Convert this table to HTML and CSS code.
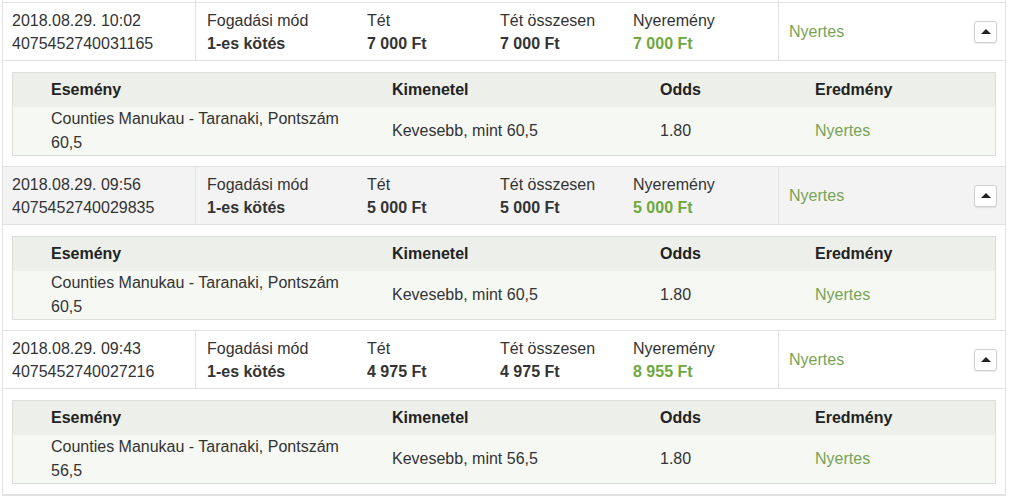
FILE: index.html
```html
<!DOCTYPE html>
<html lang="hu">
<head>
<meta charset="utf-8">
<title>Fogadások</title>
<link rel="stylesheet" href="styles.css">
</head>
<body>
<div class="bets">
  <div class="summary stub">
    <div class="c c1"></div><div class="c"></div><div class="c"></div><div class="c"></div><div class="c c5"></div><div class="c c6"></div>
  </div>

  <div class="summary">
    <div class="c c1"><div>2018.08.29. 10:02</div><div>4075452740031165</div></div>
    <div class="c"><div>Fogadási mód</div><div class="b">1-es kötés</div></div>
    <div class="c"><div>Tét</div><div class="b">7 000 Ft</div></div>
    <div class="c"><div>Tét összesen</div><div class="b">7 000 Ft</div></div>
    <div class="c c5"><div>Nyeremény</div><div class="b win">7 000 Ft</div></div>
    <div class="c c6"><span class="status">Nyertes</span><span class="toggle"><span class="tri"></span></span></div>
  </div>
  <div class="detail">
    <div class="dbox">
      <div class="drow dhead"><div>Esemény</div><div>Kimenetel</div><div>Odds</div><div>Eredmény</div></div>
      <div class="drow dbody"><div class="ev">Counties Manukau - Taranaki, Pontszám 60,5</div><div>Kevesebb, mint 60,5</div><div>1.80</div><div class="status">Nyertes</div></div>
    </div>
  </div>

  <div class="summary alt">
    <div class="c c1"><div>2018.08.29. 09:56</div><div>4075452740029835</div></div>
    <div class="c"><div>Fogadási mód</div><div class="b">1-es kötés</div></div>
    <div class="c"><div>Tét</div><div class="b">5 000 Ft</div></div>
    <div class="c"><div>Tét összesen</div><div class="b">5 000 Ft</div></div>
    <div class="c c5"><div>Nyeremény</div><div class="b win">5 000 Ft</div></div>
    <div class="c c6"><span class="status">Nyertes</span><span class="toggle"><span class="tri"></span></span></div>
  </div>
  <div class="detail">
    <div class="dbox">
      <div class="drow dhead"><div>Esemény</div><div>Kimenetel</div><div>Odds</div><div>Eredmény</div></div>
      <div class="drow dbody"><div class="ev">Counties Manukau - Taranaki, Pontszám 60,5</div><div>Kevesebb, mint 60,5</div><div>1.80</div><div class="status">Nyertes</div></div>
    </div>
  </div>

  <div class="summary">
    <div class="c c1"><div>2018.08.29. 09:43</div><div>4075452740027216</div></div>
    <div class="c"><div>Fogadási mód</div><div class="b">1-es kötés</div></div>
    <div class="c"><div>Tét</div><div class="b">4 975 Ft</div></div>
    <div class="c"><div>Tét összesen</div><div class="b">4 975 Ft</div></div>
    <div class="c c5"><div>Nyeremény</div><div class="b win">8 955 Ft</div></div>
    <div class="c c6"><span class="status">Nyertes</span><span class="toggle"><span class="tri"></span></span></div>
  </div>
  <div class="detail">
    <div class="dbox">
      <div class="drow dhead"><div>Esemény</div><div>Kimenetel</div><div>Odds</div><div>Eredmény</div></div>
      <div class="drow dbody"><div class="ev">Counties Manukau - Taranaki, Pontszám 56,5</div><div>Kevesebb, mint 56,5</div><div>1.80</div><div class="status">Nyertes</div></div>
    </div>
  </div>
</div>
</body>
</html>
```

FILE: styles.css
```css
* { box-sizing: border-box; }

body {
  margin: 0;
  background: #fff;
  font-family: "Liberation Sans", Arial, sans-serif;
  font-size: 16px;
  color: #333;
}

.bets {
  margin-left: 2px;
  width: 1004px;
  border-left: 1px solid #e2e2e2;
  border-right: 1px solid #e2e2e2;
  border-bottom: 1px solid #e2e2e2;
}

.summary {
  display: grid;
  grid-template-columns: 193px 160px 133px 133px 157px 1fr;
  border-bottom: 1px solid #e2e2e2;
  line-height: 23px;
}

.summary.alt { background: #f3f3f3; }

.summary .c {
  padding: 6px 0 5px 11px;
}

.summary .c1 {
  padding-left: 9px;
  border-right: 1px solid #e2e2e2;
}

.summary .c5 { border-right: 1px solid #e2e2e2; }

.summary .c6 {
  display: flex;
  align-items: center;
  justify-content: space-between;
  padding: 0 8px 0 10px;
}

.summary.stub { height: 3px; }
.summary.stub .c { padding: 0; }

.b { font-weight: bold; }
.win { color: #6fa83c; }
.status { color: #78a355; }

.toggle {
  display: flex;
  align-items: center;
  justify-content: center;
  width: 23px;
  height: 22px;
  background: #fff;
  border: 1px solid #cfcfcf;
  border-radius: 3px;
  box-shadow: 0 1px 1px rgba(0, 0, 0, 0.08);
}

.tri {
  width: 0;
  height: 0;
  border-left: 5px solid transparent;
  border-right: 5px solid transparent;
  border-bottom: 5px solid #222;
}

.detail {
  padding: 11px 9px 10px 9px;
  border-bottom: 1px solid #e2e2e2;
}

.dbox {
  border: 1px solid #dcdedb;
}

.drow {
  display: grid;
  grid-template-columns: 379px 268px 155px 1fr;
  align-items: center;
}

.drow > div:first-child {
  padding-left: 38px;
  padding-right: 30px;
}

.dhead {
  height: 34px;
  background: #edf0ea;
  font-weight: bold;
  color: #222;
}

.dbody {
  height: 48px;
  background: #f6f8f3;
  line-height: 24px;
}
```
